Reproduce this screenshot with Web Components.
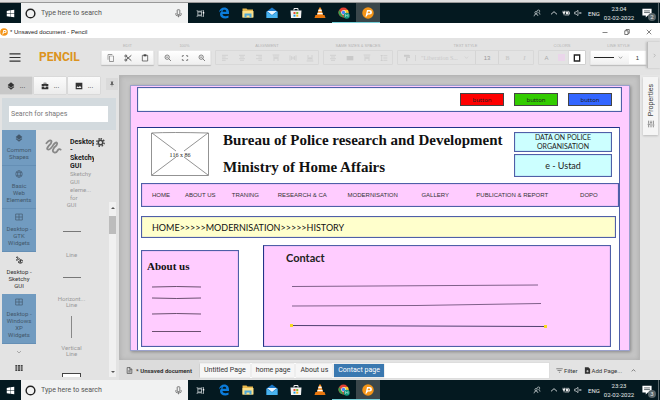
<!DOCTYPE html>
<html lang="en">
<head>
<meta charset="utf-8">
<title>Unsaved document - Pencil</title>
<style>
html,body{margin:0;height:100%;background:#fff}
body{font-family:Roboto,"Liberation Sans",sans-serif;font-size:7px;color:#333}
</style>
</head>
<body>
<pencil-desktop></pencil-desktop>
<script>
const RESET = `*{box-sizing:border-box}button,input,select{font:inherit;color:inherit;margin:0;padding:0;border:0;background:none;border-radius:0;outline:0;min-width:0}button{display:flex;align-items:center;justify-content:center}a{color:inherit;text-decoration:none}h1,h2,p{margin:0}`;
function define(name, css, html, setup) {
  customElements.define(name, class extends HTMLElement {
    connectedCallback() {
      if (this.shadowRoot) return;
      const root = this.attachShadow({mode: 'open'});
      root.innerHTML = `<style>${RESET}${css}</style>` + (typeof html === 'function' ? html(this) : html);
      if (setup) setup(this);
    }
  });
}

const rows = (...r) => r.map(([x, y, w]) => `<path d="M${x} ${y}h${w}" stroke="currentColor" stroke-width="2"/>`).join('');
const ICONS = {
  win: '<path fill="#fff" d="M2 5l9-1.400v8H2zM12 3.400L22 2v9.600H12zM2 12.600h9v8L2 19.400zM12 12.600h10V22l-10-1.400z"/>',
  ring: '<circle cx="12" cy="12" r="9.500" fill="none" stroke="#222" stroke-width="3.200"/>',
  mic: '<g fill="none" stroke="#555" stroke-width="2"><rect x="8.500" y="2" width="7" height="13" rx="1.500"/><path d="M5 11v4q0 3 4 3h6q4 0 4-3v-4M12 18v4"/></g>',
  task: '<g fill="none" stroke="#cfd6d8" stroke-width="2"><rect x="5" y="8" width="10" height="8"/><path d="M3 3v3h13V3M3 21v-3h13v3M20 3v18"/></g><path fill="#fff" d="M18 8h4v4h-4z"/>',
  edge: '<path fill="#0b7cdb" d="M2 11C3 4.500 7.500 1 12.500 1 19 1 22 6 22 11v3H9c.3 3 3 4.500 6 4.500 2.500 0 4.500-.7 6-1.600V21.500C19 22.700 17 23 14.500 23 8 23 4 19.500 4 14.500c0-3 1.800-5.700 5-7.500C5.800 7.300 3.500 8.700 2 11zm7-1.500h7.500C16.500 7 15 5.700 12.800 5.700S9.500 7 9 9.500z"/>',
  folder: '<path fill="#e9b94c" d="M1 3h8l2 2h11v16H1z"/><path fill="#fbe08a" d="M1 8h22v13H1z"/><path fill="#4fa8d8" d="M5 21v-8h14v8h-4v-4H9v4z"/>',
  mail: '<path fill="#1a78c8" d="M1 9L12 1l11 8v13H1z"/><path fill="#e9f6ff" d="M2 8h20l-10 8z"/><path fill="#49b4ef" d="M1 9l11 8 11-8v13H1z"/>',
  store: '<path fill="none" stroke="#eee" stroke-width="2" d="M8 7V3h8v4"/><path fill="#f2f2f2" d="M1 7h22l-1 15H2z"/><path fill="#e84e31" d="M7 10h4v4H7z"/><path fill="#77b829" d="M12.500 10h4v4h-4z"/><path fill="#1d9fdd" d="M7 15.300h4v4H7z"/><path fill="#f7b715" d="M12.500 15.300h4v4h-4z"/>',
  vlc: '<path fill="#f08a1d" d="M10.500 1h3l5 16h-13z"/><path fill="#fff" d="M9.300 5h5.400l1.200 3.700H8.100zM7.300 11.500h9.400l1 3H6.300z"/><path fill="#e9770e" d="M3 16h18l2 6H1z"/>',
  chrome: '<circle cx="11" cy="11" r="10" fill="#e34133"/><path fill="#34a050" d="M2.400 6L7.500 14l4 7A10 10 0 0 1 2.400 6z"/><path fill="#f8c72c" d="M11 6h8.800a10 10 0 0 1-8.300 15l4-7z"/><circle cx="11" cy="11" r="4.600" fill="#fff"/><circle cx="11" cy="11" r="3.500" fill="#4285f4"/><circle cx="17.500" cy="17.500" r="6" fill="#159a80"/><path d="M15 20v-5l2.500 3 2.500-3v5" fill="none" stroke="#bfe8dd" stroke-width="1.200"/>',
  pencil: '<circle cx="12" cy="12" r="11.500" fill="#f39417"/><path fill="#fff" d="M10 6h5.500a4.500 4.500 0 0 1 0 9H12l-4 5-1-1zm2.200 3L11 12.500h4a1.800 1.800 0 0 0 0-3.500z"/>',
  people: '<g fill="none" stroke="#dde3e4" stroke-width="2"><circle cx="9" cy="11" r="3.500"/><path d="M3 22q1-7 6-7t6 6M12 8q0-5 4.500-5T20 7t-3 4q4 1 4 6"/></g>',
  up: '<path fill="none" stroke="currentColor" stroke-width="2.600" d="M3 16l9-8 9 8"/>',
  down: '<path fill="none" stroke="currentColor" stroke-width="2.600" d="M4 8l8 8 8-8"/>',
  right: '<path fill="none" stroke="currentColor" stroke-width="2.600" d="M8 4l8 8-8 8"/>',
  battery: '<path fill="none" stroke="#eee" stroke-width="2" d="M10 7h11v11H8"/><path fill="#eee" d="M12 9h7v7h-7zM21 10h2v5h-2zM2 5h2v3h3V5h2v3h1v4l-3 3v4H5v-4l-3-3z"/>',
  volume: '<path fill="none" stroke="#e5e9ea" stroke-width="2" d="M2 9h4l6-5v16l-6-5H2zM16 9l6 6M22 9l-6 6"/>',
  note: '<path fill="#fff" d="M1 2h22v16h-9l-5 5v-5H1z"/><path stroke="#0b1c22" stroke-width="1.500" d="M5 7h14M5 11h14"/>',
  menu: '<path stroke="#333" stroke-width="2.600" d="M0 4h24M0 12h24M0 20h24"/>',
  copy: '<path fill="#777" d="M16 1H4a2 2 0 0 0-2 2v14h2V3h12zm3 4H8a2 2 0 0 0-2 2v14a2 2 0 0 0 2 2h11a2 2 0 0 0 2-2V7a2 2 0 0 0-2-2zm0 16H8V7h11z"/>',
  cut: '<g fill="none" stroke="#444" stroke-width="2.600"><circle cx="5.500" cy="6" r="3"/><circle cx="5.500" cy="18" r="3"/><path d="M8 8l14 12M8 16L22 4"/></g>',
  paste: '<path fill="none" stroke="#555" stroke-width="2.400" d="M4 4h16v17H4z"/><path fill="#444" d="M8 1h8v6H8z"/>',
  zoom: '<g fill="none" stroke="#666" stroke-width="2.400"><circle cx="9.500" cy="9.500" r="6.500"/><path d="M14 14l7 7M6.500 9.500h6"/></g>',
  fit: '<path fill="none" stroke="#666" stroke-width="2.400" d="M4 9V5h5M15 5h5v4M20 15v4h-5M9 19H4v-4"/>',
  al: rows([3,4,18],[3,9,11],[3,14,18],[3,19,11]),
  ac: rows([3,4,18],[6,9,12],[3,14,18],[6,19,12]),
  ar: rows([3,4,18],[10,9,11],[3,14,18],[10,19,11]),
  vt: '<path fill="none" stroke="currentColor" stroke-width="2" d="M2 3h20M6 5v16M12 5v10M18 5v16M6 12h12"/>',
  vm: '<path fill="none" stroke="currentColor" stroke-width="2" d="M3 4v16M21 4v16M8 6v12M16 6v12M8 12h8"/>',
  vb: '<path fill="none" stroke="currentColor" stroke-width="2" d="M2 21h20M6 3v16M12 9v10M18 3v16M6 13h12"/>',
  box: '<path fill="currentColor" d="M2 6h20v13H2z"/>',
  list: '<path fill="none" stroke="currentColor" stroke-width="2" d="M10 5h12M10 12h12M10 19h12M5 3v18M2 6l3-3 3 3M2 18l3 3 3-3"/>',
  roller: '<path fill="currentColor" d="M3 2h15v2h3v8h-8v10H9V10h10V6h-1v2H3z"/>',
  square: '<path fill="#fff" stroke="#222" stroke-width="4" d="M4 3h16v18H4z"/>',
  layers: '<path fill="currentColor" d="M12 1l10 8-10 8L2 9zM4 13l8 6 8-6 2 2-10 8-10-8z"/>',
  bag: '<path fill="currentColor" d="M8 6V2h8v4h6v7h-8v-2h-4v2H2V6zm2 0h4V4h-4zM2 14.500h8V17h4v-2.500h8V22H2z"/>',
  image: '<path fill="currentColor" fill-rule="evenodd" d="M2 2h20v20H2zm2.500 16h15L15 11l-4 5-3-3.500z"/>',
  pin: '<path fill="currentColor" d="M7 2h10v2h-1v7l3 3v2h-6v6h-2v-6H5v-2l3-3V4H7z"/>',
  globe: '<g fill="none" stroke="currentColor" stroke-width="1.800"><circle cx="12" cy="12" r="10"/><ellipse cx="12" cy="12" rx="4.500" ry="10"/><path d="M3 8h18M3 16h18"/></g>',
  grid: '<path fill="none" stroke="currentColor" stroke-width="2" d="M2 3h20v18H2zM12 3v18M2 12h20"/>',
  squig: '<path fill="none" stroke="currentColor" stroke-width="2.600" stroke-linecap="round" d="M2 6q5-6 7-3 1 3-4 7-4 5 0 5 3 0 7-7 4-5 5-2 1 2-4 6-4 6 0 7 3 1 5-3 2-3 4-1"/>',
  squig2: '<path fill="none" stroke="#222" stroke-width="2.600" d="M3 5q4-4 6-1T4 12q4 2 6-2t6 0-5 6q-2 5 2 5t4-6 5-2-1 7-7 0"/>',
  gear: '<g fill="none" stroke="#444"><circle cx="12" cy="12" r="6" stroke-width="4"/><path stroke-width="4" stroke-dasharray="4 3.850" d="M12 2a10 10 0 1 1-.1 0"/></g>',
  apps: '<path fill="#444" d="M1 3h6v5H1zM9 3h6v5H9zM17 3h6v5h-6zM1 9.500h6v5H1zM9 9.500h6v5H9zM17 9.500h6v5h-6zM1 16h6v5H1zM9 16h6v5H9zM17 16h6v5h-6z"/>',
  sliders: '<path stroke="#555" stroke-width="2" d="M5 2v9M5 15v7M12 2v4M12 10v12M19 2v11M19 17v5M2 13h7M9 8h6M16 15h6"/>',
  doc: '<path fill="none" stroke="#444" stroke-width="2.400" d="M4 2h10l6 6v14H4zM13 2v7h7M8 13h8M8 17h8"/>',
  add: '<path fill="#333" fill-rule="evenodd" d="M3 1h12l6 6v16H3zM11 10v3H8v2h3v3h2v-3h3v-2h-3v-3z"/>',
  filter: '<path stroke="#444" stroke-width="2" d="M1 6h22M5 12h14M10 18h4"/>',
  min: '<path stroke="#333" stroke-width="2.400" d="M2 14h20"/>',
  max: '<path fill="none" stroke="#333" stroke-width="2.600" d="M3 7h13v15H3zM8 7V2h13v15h-5"/>',
  close: '<path stroke="#333" stroke-width="2.400" d="M3 3l18 18M21 3L3 21"/>'
};
define('ui-icon', ':host{display:inline-flex;width:8px;height:8px;flex:none}svg{width:100%;height:100%}',
  el => `<svg viewBox="0 0 24 24" aria-hidden="true">${ICONS[el.getAttribute('name')] || ''}</svg>`);

define('task-bar', `
:host{display:flex;height:20px;flex:none;background:#041920;color:#e4e8e9}
.start{width:21px}.start ui-icon{width:9px;height:9px}
.search{display:flex;align-items:center;width:167px;background:#f1f2f2;padding:0 5px 0 4px;gap:5px}
.search ui-icon{width:11px;height:11px}.search ui-icon.mic{width:9px;height:9px}
input{flex:1;color:#555;font-size:7px}input::placeholder{color:#555;opacity:1}
nav{display:flex;flex:1}nav button{width:24px;height:20px}nav ui-icon{width:12px;height:12px}
nav ui-icon[name=task]{width:9px;height:9px}
.run{box-shadow:inset 0 -1px #76cfd8}.act{background:#3a474b}
.tray{display:flex;align-items:center;font-size:6px}
.tray button{width:12px;height:20px}.tray .p{width:22px}
.lang{width:20px;text-align:center}.clock{width:30px;margin-right:4px;display:flex;flex-direction:column;align-items:center;line-height:9px;white-space:nowrap}
.tray .note{width:18px;position:relative}.note ui-icon{width:10px;height:10px}
.note span{position:absolute;right:0;bottom:2px;width:8px;height:8px;border-radius:4px;background:#59666a;line-height:8px;font-size:6px}
.end{width:1px;height:20px;background:#5b686c;margin-left:2px;margin-right:1px}`,
  el => `<button class="start" aria-label="Start"><ui-icon name="win"></ui-icon></button>
<label class="search"><ui-icon name="ring"></ui-icon><input aria-label="Search" placeholder="Type here to search"><ui-icon class="mic" name="mic"></ui-icon></label>
<nav>${['task','edge','folder','mail','store','vlc','chrome','pencil'].map(n => `<button aria-label="${n}" class="${n=='chrome'?'run':n=='pencil'?'run act':''}"><ui-icon name="${n}"></ui-icon></button>`).join('')}</nav>
<div class="tray"><button class="p" aria-label="People"><ui-icon name="people"></ui-icon></button><button aria-label="Show hidden"><ui-icon name="up"></ui-icon></button><button aria-label="Battery"><ui-icon name="battery"></ui-icon></button><button aria-label="Volume"><ui-icon name="volume"></ui-icon></button><span class="lang">ENG</span><div class="clock"><span>${el.getAttribute('time')}</span><span>02-02-2022</span></div><button class="note" aria-label="Notifications"><ui-icon name="note"></ui-icon><span>${el.getAttribute('count')}</span></button><i class="end"></i></div>`);

define('title-bar', `
:host{display:flex;align-items:center;height:15px;flex:none;background:#fff;padding-top:3px;box-sizing:border-box;color:#222;font-size:6px;font-family:"Liberation Sans",sans-serif}
span{flex:1;padding-left:2px}button{width:22px;height:12px}button ui-icon{width:6px;height:6px}`,
`<ui-icon name="pencil"></ui-icon><span>* Unsaved document - Pencil</span><button aria-label="Minimise"><ui-icon name="min"></ui-icon></button><button aria-label="Restore"><ui-icon name="max"></ui-icon></button><button aria-label="Close"><ui-icon name="close"></ui-icon></button>`);

define('tool-group', `
:host{display:flex;flex-direction:column;flex:none;color:#c9c9c9;font-family:"Liberation Sans",sans-serif}
.t{font-size:4px;line-height:8px;text-align:center;color:#b4b4b4;height:8px}
.b{display:flex;height:15px;border:1px solid #d8d8d8;border-radius:1px}
:host([on]) .b{background:linear-gradient(#fff,#f0f0f0);border-color:#e8e8e8;box-shadow:0 1px 1px #bbb}`,
el => `<div class="t">${el.getAttribute('label')}</div><div class="b"><slot></slot></div>`);

const tb = (...n) => n.map(i => `<button aria-label="${i}"><ui-icon name="${i}"></ui-icon></button>`).join('');
define('tool-bar', `
:host{display:flex;align-items:flex-start;height:37px;box-sizing:border-box;flex:none;background:#e3e3e3;padding:4px 0 0 8px;gap:4px;overflow:hidden}
.menu{width:13px;height:30px;margin-right:14px;flex:none}.menu ui-icon{width:12px;height:11px}
h1{font-size:12px;line-height:30px;color:#dc9320;width:58px;flex:none}
tool-group button{width:17px;height:13px;flex:none}tool-group button ui-icon{width:8px;height:8px}
select{appearance:none;font:6px "Liberation Serif",serif;width:60px;padding-left:5px;border-left:1px solid #d5d5d5}
.drop{display:flex;align-items:center;border-right:1px solid #d5d5d5}.drop ui-icon{width:5px;height:5px;margin:0 6px 0 -11px}
input{width:23px;text-align:center;font-size:6px;border-right:1px solid #d5d5d5}
.sz{color:#999}
.big{font:bold 6px "Liberation Serif",serif}.sw{width:7px;height:7px;background:#ead6ea}
.sq{background:#fff;box-shadow:0 0 1px #aaa}
.line{display:flex;align-items:center;width:38px;padding-left:3px;gap:4px;color:#555}.line select{width:20px;border:0;padding:0;background:linear-gradient(#222,#222) center/20px 1px no-repeat}.line ui-icon{width:5px;height:5px}
.n{background:#fff;color:#333;width:17px;border:0}
.more{width:14px;height:26px;border-left:1px solid #bbb;box-shadow:-1px 0 2px #bbb;color:#999;margin-left:-4px;flex:none}.more ui-icon{width:5px;height:5px}`,
`<button class="menu" aria-label="Menu"><ui-icon name="menu"></ui-icon></button><h1>PENCIL</h1>
<tool-group label="EDIT" on>${tb('copy','cut','paste')}</tool-group>
<tool-group label="100%" on>${tb('zoom','fit','zoom')}</tool-group>
<tool-group label="ALIGNMENT">${tb('al','ac','ar','vt','vm','vb')}</tool-group>
<tool-group label="SAME SIZES &amp; SPACES">${tb('ac','box','vt','list')}</tool-group>
<tool-group label="TEXT STYLE">${tb('roller')}<span class="drop"><select aria-label="Font"><option>"Liberation S...</option></select><ui-icon name="down"></ui-icon></span><input class="sz" aria-label="Font size" value="13"><button class="big">B</button><button class="big"><i>I</i></button></tool-group>
<tool-group label="COLORS"><button style="width:15px;font-size:6px;color:#aaa">A</button><button style="width:15px" aria-label="Fill colour"><span class="sw"></span></button><button class="sq" style="width:16px" aria-label="Stroke colour"><ui-icon name="square"></ui-icon></button></tool-group>
<tool-group label="LINE STYLE" on><span class="line"><select aria-label="Line style"><option></option></select><ui-icon name="down"></ui-icon></span><input class="n" aria-label="Line width" value="1"></tool-group>
<button class="more" aria-label="More"><ui-icon name="right"></ui-icon></button>`);

define('shape-category', `
:host{display:block;color:#43586b;background:#719bc0;border-bottom:1px solid #658fb5}
button{width:100%;flex-direction:column;padding:4px 0 5px;line-height:7px;font-size:6px}
ui-icon{margin-bottom:4px}
:host([open]){background:none;color:#333;border:0}`,
el => `<button><ui-icon name="${el.getAttribute('icon')}"></ui-icon><slot></slot></button>`);

define('side-panel', `
:host{display:flex;flex-direction:column;width:119px;box-sizing:border-box;flex:none;background:#e3e3e3;padding-top:2px;min-height:0;overflow:hidden}
.tabs{display:flex;gap:2px;height:17px;flex:none}.tabs button{width:32px;gap:5px;background:linear-gradient(#fbfbfb,#ececec);box-shadow:0 0 1px #aaa;color:#333}
.tabs button.s{background:#c8c8c8}.tabs .pin{width:12px;height:12px;margin:1px 0 0 4px;background:#dadada;color:#666;box-shadow:none}.pin ui-icon{width:6px;height:6px}
.search{margin:4px 3px 0 2px;padding:8px 8px 8px 7px;background:#d3dade;display:flex;flex:none}
.search input{flex:1;height:16px;background:#fff;padding-left:2px;font-size:7px}input::placeholder{color:#777;opacity:1}
.main{display:flex;flex:1;min-height:0;padding:0 3px 0 2px}
.cats{width:34px;flex:none;display:flex;flex-direction:column}
.cats>button{height:16px;color:#888}.cats>button ui-icon{width:6px;height:6px}.cats>button ui-icon[name=apps]{width:8px;height:8px}
.shapes{flex:1;display:flex;flex-direction:column;min-width:0}
.head{display:flex;padding:8px 9px 0 9px;height:72px;flex:none}
.head>ui-icon{width:17px;height:17px;margin-top:1px;color:#888}
.txt{width:24px;margin:0 2px 0 8px;overflow:hidden;line-height:8px;color:#999;font-size:6px}.txt h2{font-size:7px;line-height:8px;color:#222;white-space:nowrap;font-weight:700}
.gear ui-icon{width:9px;height:9px}.gear{height:9px}
.scroll{display:flex;flex:1;min-height:0;margin-bottom:3px}
ul{list-style:none;margin:0;padding:0 0 0 11px;flex:1;min-height:0;overflow:hidden;text-align:center;color:#999;font-size:6px;line-height:6px}
li{height:49px;display:flex;flex-direction:column;align-items:center}
li.cap{height:8px}
li .g{height:42px;display:flex;align-items:center}li.last .g{height:38px}.h{width:18px;height:1px;background:#777}.v{width:1px;height:22px;background:#888}
.r{width:19px;height:6px;background:#fff;border:1px solid #444;border-bottom:0}
.bar{width:7px;background:#f0f0f0;display:flex;flex-direction:column;align-items:center;justify-content:space-between;margin-left:13px}
.bar i{border:2px solid transparent}.bar .u{border-bottom-color:#555;margin-top:3px}.bar .d{border-top-color:#555;margin-bottom:2px}.bar .t{width:7px;height:18px;background:#bcbcbc;margin:7px 0 auto}`,
`<div class="tabs"><button class="s"><ui-icon name="layers"></ui-icon>...</button><button><ui-icon name="bag"></ui-icon>...</button><button><ui-icon name="image"></ui-icon>...</button><button class="pin" aria-label="Pin"><ui-icon name="pin"></ui-icon></button></div>
<div class="search"><input aria-label="Search for shapes" placeholder="Search for shapes"></div>
<div class="main"><div class="cats">
<shape-category icon="layers">Common<br>Shapes</shape-category><shape-category icon="globe">Basic<br>Web<br>Elements</shape-category><shape-category icon="grid">Desktop -<br>GTK<br>Widgets</shape-category><shape-category icon="squig2" open>Desktop -<br>Sketchy<br>GUI</shape-category><shape-category icon="grid">Desktop -<br>Windows<br>XP<br>Widgets</shape-category>
<button aria-label="More"><ui-icon name="down"></ui-icon></button><button aria-label="All"><ui-icon name="apps"></ui-icon></button></div>
<div class="shapes"><div class="head"><ui-icon name="squig"></ui-icon><div class="txt"><h2>Desktop<br>-<br>Sketchy<br>GUI</h2>Sketchy<br>GUI<br>eleme...<br>for</div><button class="gear" aria-label="Settings"><ui-icon name="gear"></ui-icon></button></div>
<div class="scroll"><ul><li class="cap">GUI</li><li><div class="g"><i class="h"></i></div>Line</li><li><div class="g"><i class="h"></i></div>Horizont...<br>Line</li><li><div class="g"><i class="v"></i></div>Vertical<br>Line</li><li class="last"><div class="g"><i class="r"></i></div></li></ul>
<div class="bar"><i class="u"></i><i class="t"></i><i class="d"></i></div></div></div></div>`);

define('wire-box', `
:host{display:flex;flex-direction:column;justify-content:center;border:1px solid #4f5fa8;box-shadow:inset 0 0 1px #4f5fa8;box-sizing:border-box}`, '<slot></slot>');

define('page-canvas', `
:host{display:flex;flex:1;min-width:0;background:#c5c5c5;padding:9px 9px 9px 10px;border:1px solid #b5b5b5;border-width:1px 1px 0;box-shadow:inset 0 0 5px #aaa}
.page{flex:1;display:flex;flex-direction:column;background:#fcf;border:1px solid #9aa0cc;padding:1px 7px 0 6px;box-shadow:1px 1px 3px #888;min-width:0}
.top{height:25px;background:#fff;flex-direction:row;justify-content:flex-end;align-items:center;padding-right:9px;gap:10px}
.top button{width:44px;height:13px;border:1px solid #444;color:#222;font:6px "Noto Sans",sans-serif}
.site{flex:1;display:flex;flex-direction:column;background:#fff;margin:15px 2px 0 0;border:1px solid #4f5fa8;border-top-color:#223388;border-bottom:0;min-height:0}
header{display:flex;padding:4px 7px 5px 13px;height:55px}
.ph{width:58px;height:44px;flex:none}
.ttl{flex:1;padding-left:14px;margin-top:-5px;white-space:nowrap;font:bold 15px/27px "Liberation Serif",serif;color:#111}.ttl h1,.ttl h2{font:inherit}
.side{width:98px;display:flex;flex-direction:column;gap:2px;flex:none;font-family:Lato,sans-serif;text-align:center;color:#222}
.side wire-box{background:#cff}.side .a{height:20px;font-size:7px;line-height:9px}.side .b{height:23px;font-size:9px}
.nav{background:#fcf;height:24px;margin-left:3px}
.nav nav{display:grid;grid-template-columns:33fr 47fr 46fr 70fr 74fr 55fr 104fr 38fr;padding-left:10px;font:6px "Liberation Sans",sans-serif;color:#333;white-space:nowrap}
.crumb{background:#ffc;height:22px;margin:9px 3px 0 3px;padding-left:10px;font:9px Lato,sans-serif;color:#111}
.cols{display:flex;flex:1;gap:24px;padding:7px 8px 3px 3px;min-height:0}
.cols wire-box{background:#fcf;justify-content:flex-start}.about{width:98px;flex:none;margin-top:5px}.contact{flex:1;border-left-color:#223388}
.about h2{font:bold 11px/12px "Liberation Serif",serif;color:#111;padding:9px 0 1px 5px}
.contact h2{font:bold 11px/14px Lato,sans-serif;color:#222;padding:5px 0 0 22px}
.cols svg{width:100%;flex:none;display:block}`,
`<div class="page"><wire-box class="top"><button style="background:#f00">button</button><button style="background:#3c0">button</button><button style="background:#36f">button</button></wire-box>
<div class="site"><header>
<svg class="ph" viewBox="0 0 58 44" role="img" aria-label="116 x 86"><path d="M.5 1Q20 0 57.500 1V43.500H.5zM1 1l56 42M57 1L1 43" fill="none" stroke="#777" stroke-width=".8"/><path fill="#fff" d="M25 18h8v8h-8z"/><text x="29" y="25" text-anchor="middle" font-family="Liberation Serif" font-size="6" fill="#222">116 x 86</text></svg>
<div class="ttl"><h1>Bureau of Police research and Development</h1><h2>Ministry of Home Affairs</h2></div>
<div class="side"><wire-box class="a">DATA ON POLICE<br>ORGANISATION</wire-box><wire-box class="b">e - Ustad</wire-box></div></header>
<wire-box class="nav"><nav>${['HOME','ABOUT US','TRANING','RESEARCH &amp; CA','MODERNISATION','GALLERY','PUBLICATION &amp; REPORT','DOPO'].map(t => `<a href="#">${t}</a>`).join('')}</nav></wire-box>
<wire-box class="crumb">HOME&gt;&gt;&gt;&gt;&gt;MODERNISATION&gt;&gt;&gt;&gt;&gt;HISTORY</wire-box>
<div class="cols"><wire-box class="about"><h2>About us</h2><svg viewBox="0 0 96 70" height="70" preserveAspectRatio="none"><g fill="none" stroke="#6b5070"><path d="M10 14q24-1 49 0M10 25q25 1 49 0M10 41q24-1 49 0M10 58.500h49"/></g></svg></wire-box>
<wire-box class="contact"><h2>Contact</h2><svg viewBox="0 0 346 75" height="75" preserveAspectRatio="none"><g fill="none" stroke="#80608a"><path d="M28 21.500L274 20M28 41l125-.5L277 38.500"/><path stroke="#504070" d="M28 60.500l253 1"/></g><path fill="#f6dc22" d="M26 59h3v3h-3zM280 60h3v3h-3z"/></svg></wire-box></div></div></div>`);

define('props-rail', `
:host{display:flex;width:20px;box-sizing:border-box;flex:none;background:#e6e6e6;padding:2px 2px 0 3px;align-items:flex-start}
button{width:15px;height:58px;background:#f5f5f5;box-shadow:0 1px 2px #bbb;flex-direction:column;gap:4px;color:#444}
span{writing-mode:vertical-rl;transform:rotate(180deg);font-size:7px}`,
`<button><span>Properties</span><ui-icon name="sliders"></ui-icon></button>`);

define('page-tabs', `
:host{display:flex;height:20px;box-sizing:border-box;flex:none;background:#e3e3e3;align-items:center;color:#333;padding-right:22px}
.doc{width:80px;height:20px;gap:3px;display:flex;align-items:center;justify-content:center;font-size:6px;font-weight:700;background:#dcdcdc}
.doc ui-icon,.a ui-icon{width:7px;height:7px}
.tabs{display:flex;flex:1;background:#fff;height:17px;padding:1px 0;gap:2px;border:1px solid #ddd}
.tabs button{height:13px;background:#f6f6f6;box-shadow:0 0 1px #999;padding:0 4px;font-size:7px;white-space:nowrap}
.tabs button.s{background:#3a78b0;color:#fff}
.a{margin-left:6px;gap:1px;font-size:6px}.a:last-child{width:10px}.a:last-child ui-icon{width:5px;height:5px}`,
`<div class="doc"><ui-icon name="doc"></ui-icon>* Unsaved document</div><div class="tabs"><button>Untitled Page</button><button>home page</button><button>About us</button><button class="s">Contact page</button></div><button class="a"><ui-icon name="filter"></ui-icon>Filter</button><button class="a"><ui-icon name="add"></ui-icon>Add Page...</button><button class="a" aria-label="Expand"><ui-icon name="up"></ui-icon></button>`);

define('pencil-desktop', `
:host{display:flex;flex-direction:column;min-height:100vh;padding-bottom:7px;box-sizing:border-box}
.strip{height:3px;flex:none;background:#e0e0e0;border-bottom:1px solid #999}
.work{display:flex;flex:1;min-height:0}.col{display:flex;flex-direction:column;flex:1;min-width:0}.row{display:flex;flex:1;min-height:0}
:host{height:100vh}`,
`<div class="strip"></div><task-bar time="23:04" count="2"></task-bar><title-bar></title-bar><tool-bar></tool-bar>
<div class="work"><side-panel></side-panel><div class="col"><div class="row"><page-canvas></page-canvas><props-rail></props-rail></div><page-tabs></page-tabs></div></div>
<task-bar time="23:23" count="3"></task-bar>`);
</script>
</body>
</html>
